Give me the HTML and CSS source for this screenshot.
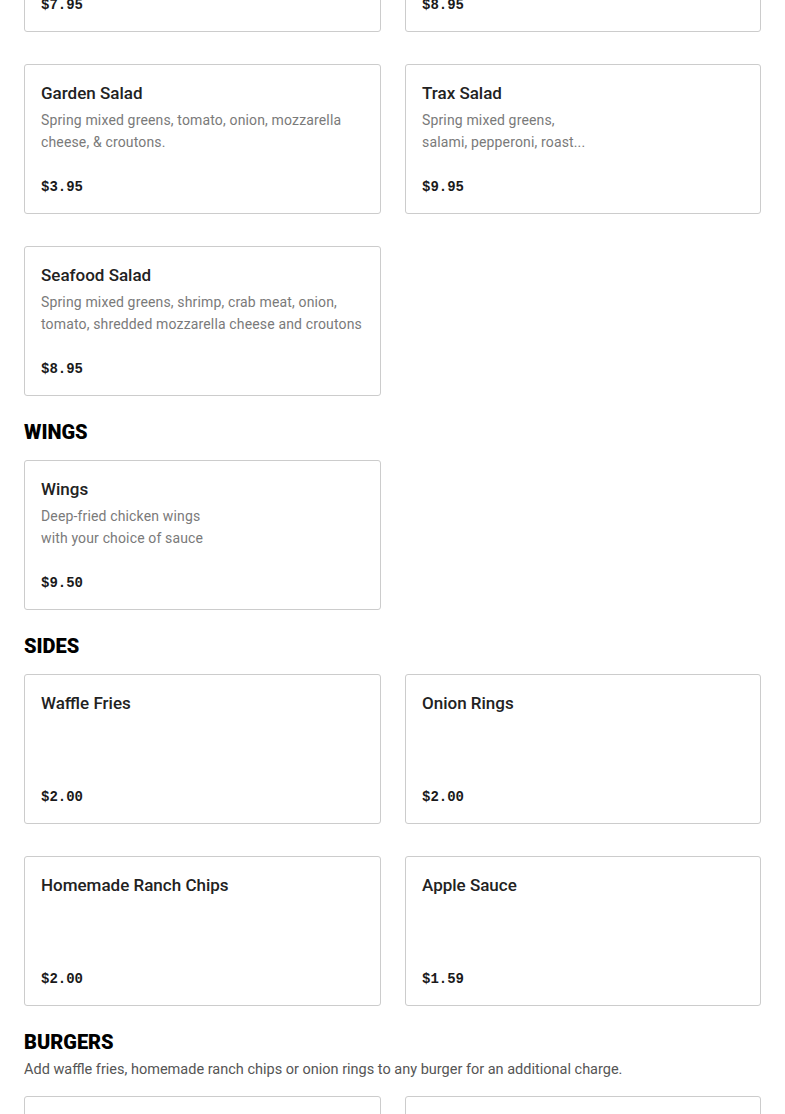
FILE: index.html
```html
<!DOCTYPE html>
<html lang="en">
<head>
<meta charset="utf-8">
<title>Menu</title>
<link rel="stylesheet" href="styles.css">
</head>
<body>
<main class="menu">
  <section class="section section-first">
    <div class="grid">
      <article class="card">
        <h3 class="card-title">Chef Salad</h3>
        <p class="card-desc">Spring mixed greens, ham, turkey, egg, tomato, cheese, &amp; croutons.</p>
        <p class="card-price">$7.95</p>
      </article>
      <article class="card">
        <h3 class="card-title">Chicken Salad</h3>
        <p class="card-desc">Spring mixed greens, grilled chicken, tomato, onion.</p>
        <p class="card-price">$8.95</p>
      </article>
      <article class="card">
        <h3 class="card-title">Garden Salad</h3>
        <p class="card-desc">Spring mixed greens, tomato, onion, mozzarella cheese, &amp; croutons.</p>
        <p class="card-price">$3.95</p>
      </article>
      <article class="card">
        <h3 class="card-title">Trax Salad</h3>
        <p class="card-desc">Spring mixed greens,<br>salami, pepperoni, roast...</p>
        <p class="card-price">$9.95</p>
      </article>
      <article class="card">
        <h3 class="card-title">Seafood Salad</h3>
        <p class="card-desc">Spring mixed greens, shrimp, crab meat, onion, tomato, shredded mozzarella cheese and croutons</p>
        <p class="card-price">$8.95</p>
      </article>
    </div>
  </section>

  <section class="section">
    <h2 class="section-title">WINGS</h2>
    <div class="grid">
      <article class="card">
        <h3 class="card-title">Wings</h3>
        <p class="card-desc">Deep-fried chicken wings<br>with your choice of sauce</p>
        <p class="card-price">$9.50</p>
      </article>
    </div>
  </section>

  <section class="section">
    <h2 class="section-title">SIDES</h2>
    <div class="grid">
      <article class="card">
        <h3 class="card-title">Waffle Fries</h3>
        <p class="card-price">$2.00</p>
      </article>
      <article class="card">
        <h3 class="card-title">Onion Rings</h3>
        <p class="card-price">$2.00</p>
      </article>
      <article class="card">
        <h3 class="card-title">Homemade Ranch Chips</h3>
        <p class="card-price">$2.00</p>
      </article>
      <article class="card">
        <h3 class="card-title">Apple Sauce</h3>
        <p class="card-price">$1.59</p>
      </article>
    </div>
  </section>

  <section class="section">
    <h2 class="section-title section-title-tight">BURGERS</h2>
    <p class="section-desc">Add waffle fries, homemade ranch chips or onion rings to any burger for an additional charge.</p>
    <div class="grid">
      <article class="card">
        <h3 class="card-title">Hamburger Deluxe</h3>
        <p class="card-desc">Quarter pound burger with lettuce, tomato, onion.</p>
        <p class="card-price">$6.95</p>
      </article>
      <article class="card">
        <h3 class="card-title">Cheeseburger Deluxe</h3>
        <p class="card-desc">Quarter pound burger with cheese, lettuce, tomato.</p>
        <p class="card-price">$7.45</p>
      </article>
    </div>
  </section>
</main>
</body>
</html>
```

FILE: styles.css
```css
html, body {
  margin: 0;
  padding: 0;
  background: #ffffff;
}

body {
  font-family: Roboto, "Liberation Sans", Arial, sans-serif;
  color: #1a1a1a;
  overflow: hidden;
}

.menu {
  padding: 0 24px;
  margin-top: -118px;
}

.section {
  margin-top: 24px;
}

.section-first {
  margin-top: 0;
}

.section-title {
  margin: 0 0 16px;
  font-family: Roboto, "Liberation Sans", sans-serif;
  font-weight: 900;
  font-size: 20px;
  line-height: 24px;
  color: #000;
}

.section-title-tight {
  margin-bottom: 5px;
}

.section-desc {
  margin: 0 0 15px;
  font-size: 14.5px;
  line-height: 22px;
  color: #555;
}

.grid {
  display: grid;
  grid-template-columns: 357px 356px;
  column-gap: 24px;
  row-gap: 32px;
}

.card {
  box-sizing: border-box;
  height: 150px;
  border: 1px solid #cccccc;
  border-radius: 3px;
  padding: 16px 16px 15px;
  display: flex;
  flex-direction: column;
  background: #fff;
}

.card-title {
  margin: 0;
  font-size: 17px;
  line-height: 24px;
  font-weight: 500;
  color: #222;
}

.card-desc {
  margin: 4px 0 0;
  font-size: 14px;
  line-height: 22px;
  letter-spacing: 0.15px;
  color: #7a7a7a;
}

.card-price {
  margin: auto 0 0;
  font-family: "Liberation Mono", "DejaVu Sans Mono", monospace;
  font-weight: bold;
  font-size: 14px;
  line-height: 22px;
  color: #1a1a1a;
}
```
